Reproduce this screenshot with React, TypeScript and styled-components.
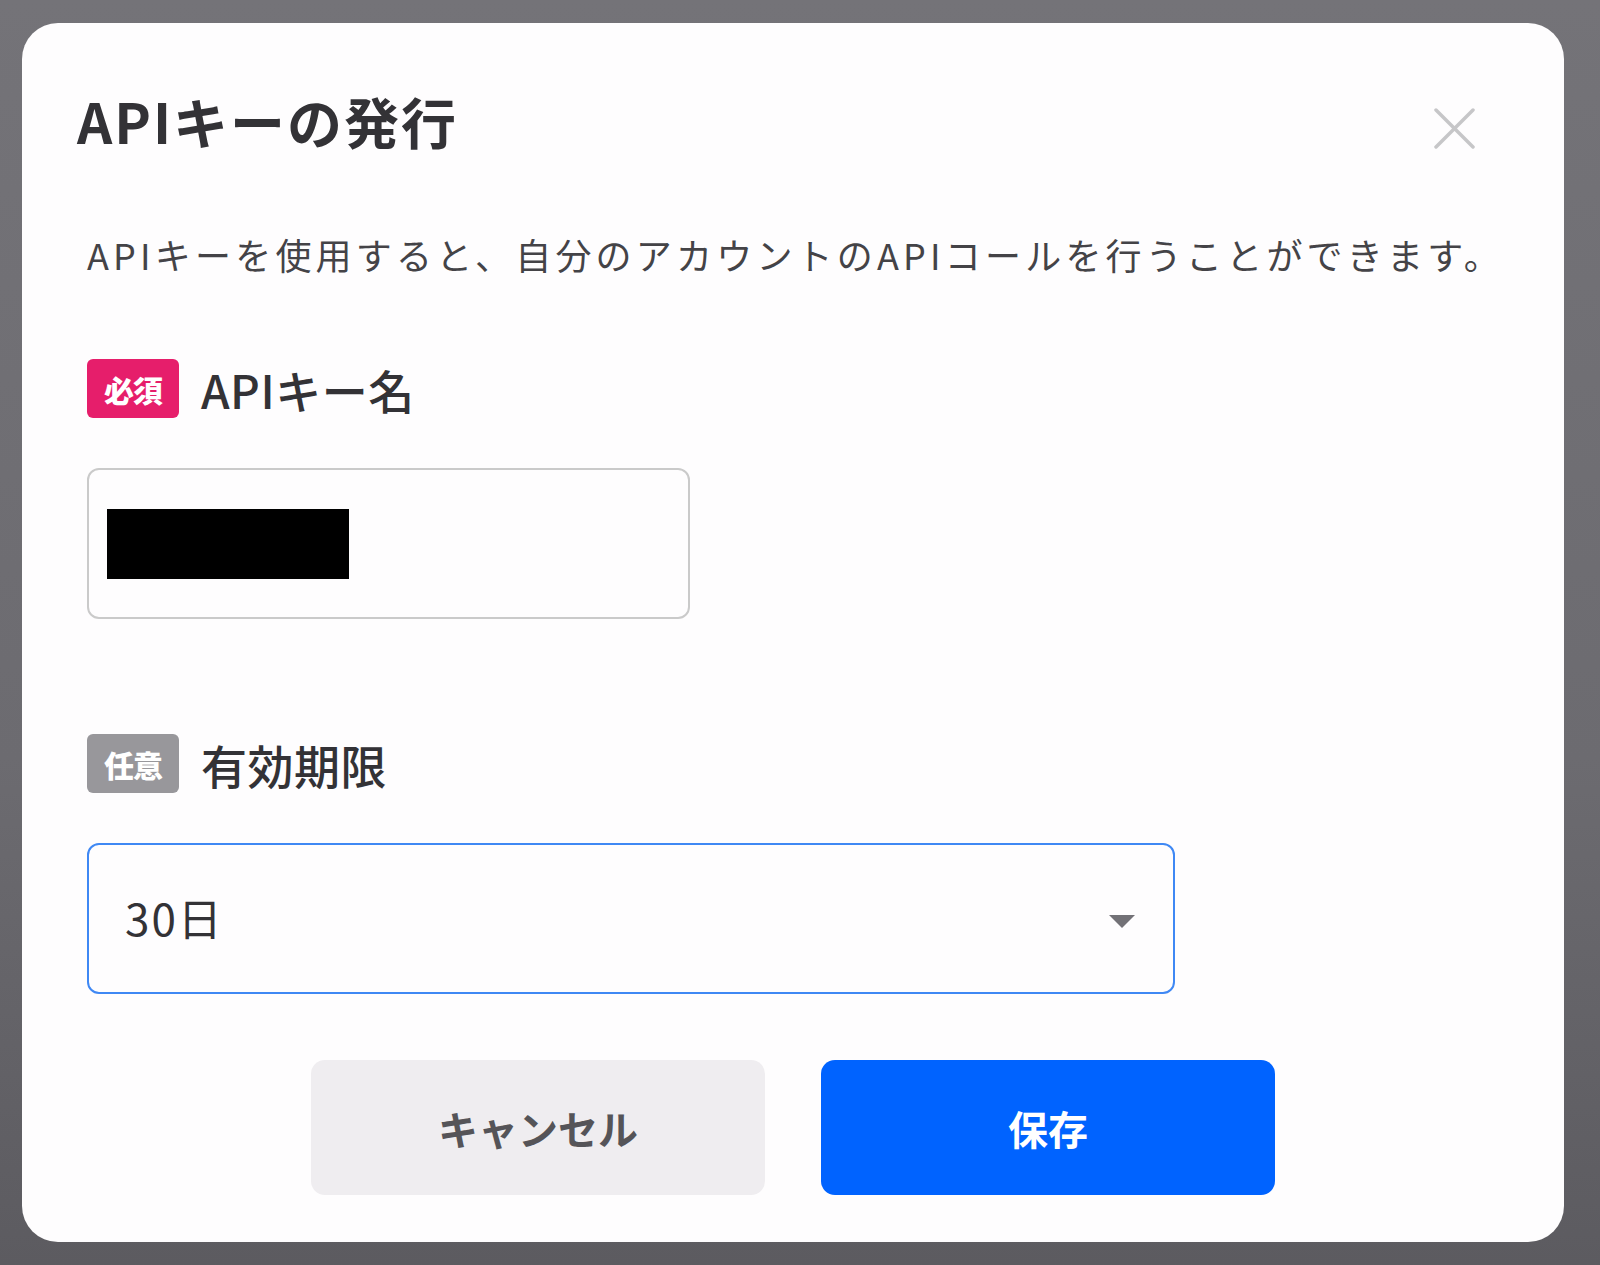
import React from "react";
import styled, { createGlobalStyle } from "styled-components";

const Global = createGlobalStyle`
  html, body { margin: 0; padding: 0; }
  body {
    font-family: "Noto Sans CJK JP", "Noto Sans", sans-serif;
    background: #69686d;
  }
  * { box-sizing: border-box; }
`;

const Backdrop = styled.div`
  width: 1600px;
  height: 1265px;
  padding: 23px 36px 23px 22px;
  background: linear-gradient(180deg, #747378 0%, #6c6b70 60%, #5c5b60 100%);
`;

const Modal = styled.div`
  width: 1542px;
  height: 1219px;
  background: #fefdfe;
  border-radius: 36px;
  display: flex;
  flex-direction: column;
  padding: 0 89px 0 65px;
`;

const Header = styled.div`
  display: flex;
  align-items: center;
  justify-content: space-between;
  margin-top: 57px;
  height: 80px;
`;

const Title = styled.h2`
  margin: 0 0 0 -10px;
  font-size: 55px;
  font-weight: 700;
  color: #333236;
  letter-spacing: 2px;
  line-height: 1;
`;

const CloseButton = styled.button`
  width: 41px;
  height: 41px;
  padding: 0;
  border: none;
  background: none;
  display: flex;
  align-items: center;
  justify-content: center;
  margin-top: 16px;
`;

const Description = styled.p`
  margin: 69px 0 0 0;
  font-size: 36px;
  line-height: 1.4;
  color: #444347;
  letter-spacing: 4.2px;
  white-space: nowrap;
`;

const LabelRow = styled.div<{ $top: number }>`
  display: flex;
  align-items: center;
  gap: 22px;
  margin-top: ${(p) => p.$top}px;
`;

const Badge = styled.span<{ $color: string }>`
  width: 92px;
  height: 59px;
  border-radius: 6px;
  background: ${(p) => p.$color};
  color: #ffffff;
  font-size: 30px;
  font-weight: 900;
  display: flex;
  align-items: center;
  justify-content: center;
  letter-spacing: -1px;
`;

const LabelText = styled.span`
  font-size: 46px;
  font-weight: 500;
  color: #333236;
  line-height: 1;
  letter-spacing: 0.5px;
`;

const TextInput = styled.div`
  margin-top: 50px;
  width: 603px;
  height: 151px;
  border: 2px solid #cacaca;
  border-radius: 12px;
  display: flex;
  align-items: center;
  padding-left: 18px;
`;

const Redacted = styled.div`
  width: 242px;
  height: 70px;
  background: #000000;
`;

const Select = styled.div`
  margin-top: 50px;
  width: 1088px;
  height: 151px;
  border: 2.5px solid #3f88f4;
  border-radius: 12px;
  display: flex;
  align-items: center;
  justify-content: space-between;
  padding: 0 38px 0 36px;
`;

const SelectValue = styled.span`
  font-size: 44px;
  color: #333236;
  letter-spacing: 2px;
  margin-top: -4px;
`;

const Caret = styled.span`
  width: 0;
  height: 0;
  border-left: 13px solid transparent;
  border-right: 13px solid transparent;
  border-top: 13px solid #727176;
  margin-top: 6px;
`;

const Footer = styled.div`
  margin-top: 66px;
  display: flex;
  justify-content: center;
  gap: 56px;
  padding-left: 24px;
`;

const Button = styled.button<{ $primary?: boolean }>`
  width: 454px;
  height: 135px;
  border: none;
  border-radius: 14px;
  background: ${(p) => (p.$primary ? "#0063ff" : "#efedf0")};
  color: ${(p) => (p.$primary ? "#ffffff" : "#555458")};
  font-family: "Noto Sans CJK JP", sans-serif;
  font-size: 40px;
  font-weight: 700;
  display: flex;
  align-items: center;
  justify-content: center;
`;

export default function App() {
  return (
    <>
      <Global />
      <Backdrop>
        <Modal>
          <Header>
            <Title>APIキーの発行</Title>
            <CloseButton aria-label="閉じる">
              <svg width="41" height="41" viewBox="0 0 41 41">
                <path
                  d="M2 2 L39 39 M39 2 L2 39"
                  stroke="#c6c6c8"
                  strokeWidth="3.5"
                  strokeLinecap="round"
                />
              </svg>
            </CloseButton>
          </Header>
          <Description>
            APIキーを使用すると、自分のアカウントのAPIコールを行うことができます。
          </Description>
          <LabelRow $top={80}>
            <Badge $color="#e61e6b">必須</Badge>
            <LabelText>APIキー名</LabelText>
          </LabelRow>
          <TextInput>
            <Redacted />
          </TextInput>
          <LabelRow $top={115}>
            <Badge $color="#98979b">任意</Badge>
            <LabelText>有効期限</LabelText>
          </LabelRow>
          <Select>
            <SelectValue>30日</SelectValue>
            <Caret />
          </Select>
          <Footer>
            <Button>キャンセル</Button>
            <Button $primary>保存</Button>
          </Footer>
        </Modal>
      </Backdrop>
    </>
  );
}
